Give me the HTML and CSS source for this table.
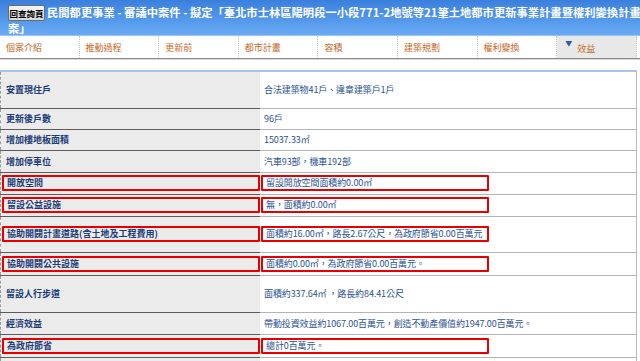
FILE: index.html
```html
<!DOCTYPE html>
<html lang="zh-Hant">
<head>
<meta charset="utf-8">
<title>民間都更事業 - 審議中案件</title>
<link rel="stylesheet" href="styles.css">
</head>
<body>
<div class="page">
  <header class="header">
    <div class="header-inner">
      <button class="back">回查詢頁</button><span class="title">民間都更事業 - 審議中案件 - 擬定「臺北市士林區陽明段一小段771-2地號等21筆土地都市更新事業計畫暨權利變換計畫案」</span>
    </div>
  </header>
  <nav class="tabs">
    <a class="tab">個案介紹</a>
    <a class="tab">推動過程</a>
    <a class="tab">更新前</a>
    <a class="tab">都市計畫</a>
    <a class="tab">容積</a>
    <a class="tab">建築規劃</a>
    <a class="tab">權利變換</a>
    <a class="tab active"><span class="arrow">▼</span>效益</a>
  </nav>
  <table class="info">
    <tr class="h37"><th>安置現住戶</th><td>合法建築物41戶、違章建築戶1戶</td></tr>
    <tr class="h21"><th>更新後戶數</th><td>96戶</td></tr>
    <tr class="h21"><th>增加樓地板面積</th><td>15037.33㎡</td></tr>
    <tr class="h22"><th>增加停車位</th><td>汽車93部，機車192部</td></tr>
    <tr class="h22"><th class="boxed"><div class="mark">開放空間</div></th><td class="boxed"><div class="mark mark-r">留設開放空間面積約0.00㎡</div></td></tr>
    <tr class="h22"><th class="boxed"><div class="mark">留設公益設施</div></th><td class="boxed"><div class="mark mark-r">無，面積約0.00㎡</div></td></tr>
    <tr class="h36"><th class="boxed"><div class="mark">協助開闢計畫道路(含土地及工程費用)</div></th><td class="boxed"><div class="mark mark-r">面積約16.00㎡，路長2.67公尺，為政府節省0.00百萬元</div></td></tr>
    <tr class="h23"><th class="boxed"><div class="mark">協助開闢公共設施</div></th><td class="boxed"><div class="mark mark-r">面積約0.00㎡，為政府節省0.00百萬元。</div></td></tr>
    <tr class="h37"><th>留設人行步道</th><td>面積約337.64㎡ ，路長約84.41公尺</td></tr>
    <tr class="h22"><th>經濟效益</th><td>帶動投資效益約1067.00百萬元，創造不動產價值約1947.00百萬元。</td></tr>
    <tr class="h23"><th class="boxed"><div class="mark">為政府節省</div></th><td class="boxed"><div class="mark mark-r">總計0百萬元。</div></td></tr>
    <tr class="h22"><th></th><td></td></tr>
  </table>
</div>
</body>
</html>
```
FILE: styles.css
```css
html, body {
  margin: 0;
  padding: 0;
  overflow: hidden;
  background: #ffffff;
}
.page {
  width: 640px;
  overflow: hidden;
  font-family: "Noto Sans CJK TC", "Noto Sans CJK SC", sans-serif;
}
.header {
  width: 640px;
  height: 35px;
  overflow: hidden;
  background: linear-gradient(#3a7fdc, #5a9eee 70%, #6aaaf2);
  border-bottom: 1px solid #9cc4f0;
}
.header-inner {
  width: 636px;
  padding: 5px 0 0 8px;
  color: #ffffff;
  font-weight: bold;
  font-size: 11.3px;
  line-height: 14px;
}
.back {
  font-family: "Noto Sans CJK TC", sans-serif;
  font-size: 8.5px;
  font-weight: bold;
  color: #000;
  height: 16px;
  width: 37px;
  padding: 0;
  margin: 0 2px 0 0;
  background: linear-gradient(#f6f6f6, #dadada);
  border: 1px solid #6a6a6a;
  border-radius: 2px;
  vertical-align: top;
  line-height: 14px;
  white-space: nowrap;
  overflow: hidden;
}
.tabs {
  display: grid;
  grid-template-columns: repeat(8, 79.6px);
  height: 22px;
  border-bottom: 1px solid #8c8c8c;
  box-shadow: 0 1px 0 #d8d8d8;
}
.tab {
  display: flex;
  align-items: center;
  padding-left: 6px;
  font-size: 9px;
  color: #c56a28;
  border-right: 1px dotted #c8c8c8;
}
.tab.active {
  background: #e8e8e8;
  align-items: flex-end;
  padding-bottom: 3px;
  box-sizing: border-box;
}
.arrow {
  color: #2a5aa8;
  font-size: 7px;
  align-self: center;
  margin: 0 5px 6px 2px;
}
.info {
  margin-top: 11px;
  width: 637px;
  border-collapse: collapse;
  border-top: 2px solid #a8c6e6;
  border-right: 1px solid #b8b8b8;
  font-size: 9px;
}
.info th {
  width: 254px;
  padding: 0 0 0 5px;
  text-align: left;
  color: #1c3c78;
  font-weight: bold;
  background: #ebebeb;
  border-left: 1px dashed #9a9a9a;
  border-bottom: 1px solid #5c5c5c;
}
.info td {
  padding: 0 0 0 4px;
  color: #2a5294;
  background: #ffffff;
  border-bottom: 1px solid #b4b4b4;
  letter-spacing: -0.1px;
}
.info th.boxed {
  padding: 0 0 0 1px;
}
.info td.boxed {
  padding: 0 0 0 1px;
}
.mark {
  border: 2px solid #e80000;
  height: 12px;
  line-height: 12px;
  padding-left: 3px;
  border-radius: 1px;
}
.mark-r {
  width: 221px;
}
.h21 { height: 21px; }
.h22 { height: 22px; }
.h23 { height: 23px; }
.h36 { height: 36px; }
.h37 { height: 37px; }
```
